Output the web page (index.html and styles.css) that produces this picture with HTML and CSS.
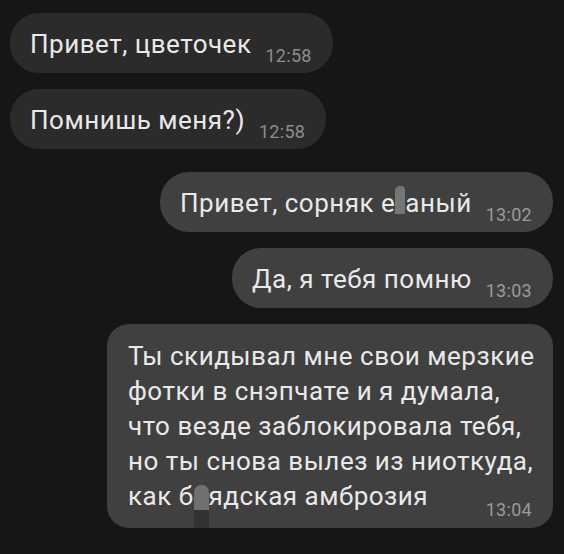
FILE: index.html
```html
<!DOCTYPE html>
<html lang="ru">
<head>
  <meta charset="utf-8">
  <title>Чат</title>
  <link rel="stylesheet" href="styles.css">
</head>
<body>

  <div class="chat">
    <div class="bubble in">
      <span class="text">Привет, цветочек</span>
      <span class="time">12:58</span>
    </div>

    <div class="bubble in">
      <span class="text">Помнишь меня?)</span>
      <span class="time">12:58</span>
    </div>

    <div class="bubble out first">
      <span class="text">Привет, сорняк е<span class="censor"></span>аный</span>
      <span class="time">13:02</span>
    </div>

    <div class="bubble out">
      <span class="text">Да, я тебя помню</span>
      <span class="time">13:03</span>
    </div>

    <div class="bubble out long">
      Ты скидывал мне свои мерзкие фотки в снэпчате и я думала, что везде заблокировала тебя, но ты снова вылез из ниоткуда, как б<span class="censor tall"></span>ядская амброзия
      <span class="time">13:04</span>
    </div>
  </div>

</body>
</html>
```

FILE: styles.css
```css
body {
  margin: 0;
  background: #161616;
  font-family: Roboto, "Noto Sans", sans-serif;
  color: #e9e9e9;
}

.chat {
  display: flex;
  flex-direction: column;
  gap: 16px;
  padding: 13px 11px 0 10px;
}

.bubble {
  display: flex;
  align-items: flex-end;
  height: 60px;
  box-sizing: border-box;
  padding: 0 21px 8px 20px;
  border-radius: 29px;
  font-size: 26px;
  letter-spacing: 0.5px;
  line-height: 35px;
}

.bubble .text {
  white-space: nowrap;
  margin-bottom: 3px;
}

.in {
  align-self: flex-start;
  background: #2b2b2b;
}

.out {
  align-self: flex-end;
  background: #404040;
}

.out.first {
  margin-top: 7px;
}

.time {
  margin-left: 14px;
  margin-bottom: -3px;
  font-size: 18px;
  letter-spacing: 0.3px;
  line-height: 24px;
  color: #8c8c8c;
}

.out .time {
  color: #9a9a9a;
}

.bubble.long {
  display: flow-root;
  height: auto;
  width: 446px;
  padding: 15px 13px 6px 21px;
  border-radius: 22px;
}

.long .time {
  float: right;
  margin: 19px 8px 0 0;
}

.censor {
  display: inline-block;
  width: 10px;
  height: 28px;
  vertical-align: -2px;
  background: #767676;
  border-radius: 5px 4px 0 0;
}

.censor.tall {
  width: 15px;
  height: 46px;
  margin-bottom: -20px;
  vertical-align: -6px;
  background: linear-gradient(#707070 0, #707070 54%, #333 54%, #333 100%);
  border-radius: 7px 7px 0 0;
}
```
